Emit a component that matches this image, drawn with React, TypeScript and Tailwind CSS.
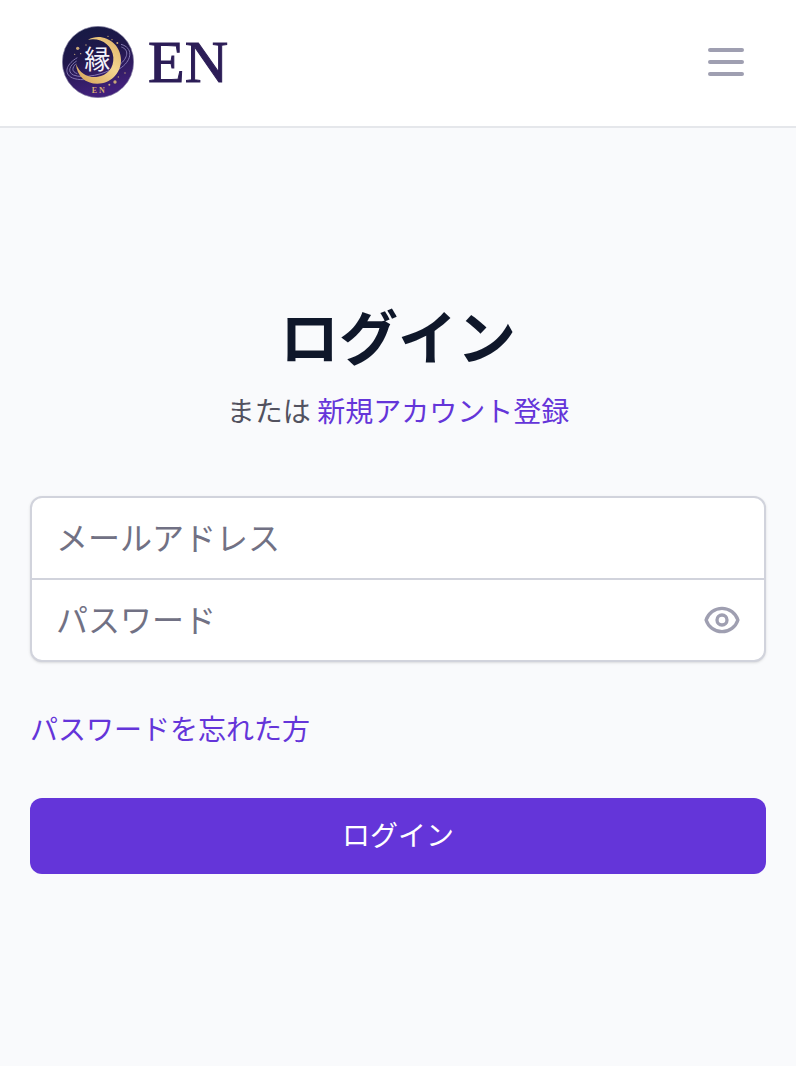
import { useState } from "react";

function Emblem() {
  return (
    <svg viewBox="36 31 216 216" className="size-[72px]" aria-hidden="true">
      <defs>
        <linearGradient id="sky" x1="0" y1="0" x2="0.3" y2="1">
          <stop offset="0" stopColor="#141a42" />
          <stop offset="0.5" stopColor="#21184c" />
          <stop offset="1" stopColor="#41207a" />
        </linearGradient>
        <linearGradient id="moon" x1="1" y1="0" x2="0.2" y2="1">
          <stop offset="0" stopColor="#dcae62" />
          <stop offset="0.5" stopColor="#f3d58f" />
          <stop offset="1" stopColor="#d9a95f" />
        </linearGradient>
      </defs>
      <circle cx="144" cy="139" r="107" fill="url(#sky)" stroke="#8d88a8" strokeWidth="2" />
      <g fill="none" stroke="#9a8fc8" strokeWidth="3" opacity="0.8">
        <path d="M82 126C52 143 40 170 62 184C90 202 168 188 215 155C246 132 250 96 213 86" />
        <path d="M80 136C60 148 50 168 70 178C100 190 165 178 208 148C235 126 238 102 214 94" />
        <path d="M78 144C66 156 64 168 82 174" />
      </g>
      <path
        d="M114 72C157 48 213 81 213 133C213 174 181 204 142 204C107 204 80 181 78 144C89 173 112 186 139 184C172 181 192 157 190 125C187 87 151 64 114 72Z"
        fill="url(#moon)"
      />
      <text
        x="142"
        y="159"
        textAnchor="middle"
        fontSize="78"
        fontWeight="400"
        fill="#f5f3fa"
        className="font-['Noto_Sans_CJK_JP',sans-serif]"
      >
        縁
      </text>
      <text
        x="145"
        y="231"
        textAnchor="middle"
        fontSize="24"
        fontWeight="700"
        fill="#d9ad72"
        className="font-['Liberation_Serif',serif]"
      >
        E N
      </text>
      <g fill="#c9a878">
        <circle cx="83" cy="98" r="5" />
        <circle cx="108" cy="88" r="2" />
        <circle cx="74" cy="116" r="2" />
        <circle cx="92" cy="114" r="2" />
        <circle cx="186" cy="72" r="2" />
        <circle cx="202" cy="82" r="3" />
        <circle cx="174" cy="62" r="2" />
        <circle cx="195" cy="199" r="5" />
        <circle cx="205" cy="184" r="2" />
        <circle cx="178" cy="207" r="3" />
        <circle cx="225" cy="172" r="2" />
      </g>
    </svg>
  );
}

function MenuIcon() {
  return (
    <svg viewBox="0 0 24 24" className="size-12" fill="none" stroke="currentColor" strokeWidth="2" strokeLinecap="round" aria-hidden="true">
      <path d="M4 6h16M4 12h16M4 18h16" />
    </svg>
  );
}

function EyeIcon() {
  return (
    <svg viewBox="0 0 24 24" className="size-10" fill="none" stroke="currentColor" strokeWidth="2" strokeLinecap="round" strokeLinejoin="round" aria-hidden="true">
      <path d="M15 12a3 3 0 11-6 0 3 3 0 016 0z" />
      <path d="M2.458 12C3.732 7.943 7.523 5 12 5c4.478 0 8.268 2.943 9.542 7-1.274 4.057-5.064 7-9.542 7-4.477 0-8.268-2.943-9.542-7z" />
    </svg>
  );
}

export default function App() {
  const [visible, setVisible] = useState(false);

  return (
    <div className="min-h-screen bg-[#f9fafc] font-['Noto_Sans_CJK_JP',sans-serif]">
      <header className="flex h-32 items-center justify-between border-b-2 border-gray-200 bg-white pr-[30px] pb-0.5 pl-[62px]">
        <a href="#" className="flex items-center gap-[14px]" aria-label="EN">
          <Emblem />
          <span className="font-['Liberation_Serif',serif] text-[60px] leading-[72px] text-[#2c1d57] [-webkit-text-stroke:1px_#2c1d57]">EN</span>
        </a>
        <button type="button" aria-label="メニュー" className="p-4 text-[#9f9fb1]">
          <MenuIcon />
        </button>
      </header>

      <main className="px-[30px] pt-[171px] pb-24">
        <h1 className="text-center text-[59px] leading-[72px] font-bold text-[#0f172a]">ログイン</h1>
        <p className="mt-5 text-center text-[28px] leading-[38px] text-[#52525f]">
          または{" "}
          <a href="#" className="text-[#6435d9]">新規アカウント登録</a>
        </p>

        <form className="mt-[67px]" onSubmit={(e) => e.preventDefault()}>
          <div className="divide-y-2 divide-[#d1d3dc] overflow-hidden rounded-xl border-2 border-[#d1d3dc] bg-white shadow-sm">
            <input
              type="email"
              aria-label="メールアドレス"
              placeholder="メールアドレス"
              className="block h-[82px] w-full px-6 pb-1 text-[32px] text-gray-900 outline-none placeholder:text-[#717184]"
            />
            <div className="flex h-20 items-center pr-[22px]">
              <input
                type={visible ? "text" : "password"}
                aria-label="パスワード"
                placeholder="パスワード"
                className="h-20 min-w-0 flex-1 px-6 pb-1 text-[32px] text-gray-900 outline-none placeholder:text-[#717184]"
              />
              <button
                type="button"
                aria-label="パスワードを表示"
                onClick={() => setVisible(!visible)}
                className="text-[#9f9fb1]"
              >
                <EyeIcon />
              </button>
            </div>
          </div>

          <div className="mt-[46px] text-[28px] leading-10">
            <a href="#" className="text-[#6435d9]">パスワードを忘れた方</a>
          </div>

          <button
            type="submit"
            className="mt-[50px] flex h-[76px] w-full items-center justify-center rounded-xl bg-[#6435d9] pb-1 text-[28px] leading-10 text-white"
          >
            ログイン
          </button>
        </form>
      </main>
    </div>
  );
}
